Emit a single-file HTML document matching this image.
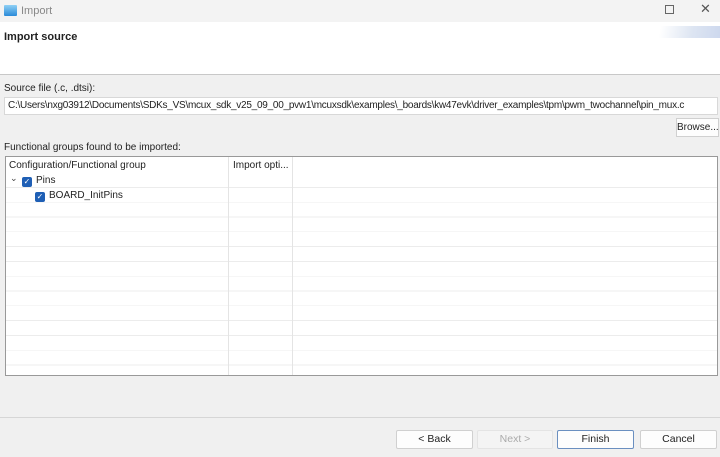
<!DOCTYPE html>
<html><head><style>
*{margin:0;padding:0;box-sizing:border-box}
body{width:720px;height:457px;background:#f0f0f0;font-family:"Liberation Sans",sans-serif;font-size:11px;color:#222;position:relative;overflow:hidden}
.a{position:absolute}
.btn{position:absolute;top:430px;height:19px;background:#fdfdfd;border:1px solid #d0d0d0;border-radius:2px;text-align:center;line-height:17px;font-size:10.5px}
.cb{position:absolute;width:10px;height:10px;background:#1f5fb5;border-radius:2px;color:#fff;font-size:8px;line-height:10px;text-align:center}
</style></head><body>
<div class="a" style="left:0;top:0;width:720px;height:22px;background:#f3f3f3"></div>
<div class="a" style="left:4px;top:5px;width:13px;height:11px;background:linear-gradient(#8fd0f5,#2a8ad8);border-radius:1px"></div>
<div class="a" style="left:21px;top:5px;color:#888;font-size:11px">Import</div>
<div class="a" style="left:665px;top:5px;width:9px;height:9px;border:1px solid #666"></div>
<div class="a" style="left:700px;top:1px;color:#555;font-size:13px">✕</div>
<div class="a" style="left:0;top:22px;width:720px;height:52px;background:#fff"></div>
<div class="a" style="left:640px;top:26px;width:80px;height:12px;background:linear-gradient(100deg,#fff 25%,#dde5f2 65%,#cdd8ee);border-radius:40px 0 0 0"></div>
<div class="a" style="left:4px;top:31px;font-weight:bold;font-size:11px">Import source</div>
<div class="a" style="left:0;top:74px;width:720px;height:1px;background:#c8c8c8"></div>
<div class="a" style="left:4px;top:83px;font-size:10px">Source file (.c, .dtsi):</div>
<div class="a" style="left:4px;top:97px;width:714px;height:18px;background:#fff;border:1px solid #d8d8d8;font-size:10px;line-height:16px;padding-left:3px;letter-spacing:-0.25px;white-space:nowrap">C:\Users\nxg03912\Documents\SDKs_VS\mcux_sdk_v25_09_00_pvw1\mcuxsdk\examples\_boards\kw47evk\driver_examples\tpm\pwm_twochannel\pin_mux.c</div>
<div class="a" style="left:676px;top:118px;width:43px;height:19px;background:#fdfdfd;border:1px solid #d0d0d0;font-size:10px;line-height:17px;text-align:center">Browse...</div>
<div class="a" style="left:4px;top:142px;font-size:10px">Functional groups found to be imported:</div>
<div class="a" style="left:5px;top:156px;width:713px;height:220px;background:#fff;border:1px solid #999;overflow:hidden">
<div style="position:absolute;left:0;top:16px;width:713px;height:210px;background:repeating-linear-gradient(#fff 0,#fff 14px,#ececec 14px,#ececec 14.8px)"></div>
<div class="a" style="left:222px;top:0;width:1px;height:220px;background:#e4e4e4"></div>
<div class="a" style="left:286px;top:0;width:1px;height:220px;background:#e4e4e4"></div>
<div class="a" style="left:3px;top:3px;font-size:10px">Configuration/Functional group</div>
<div class="a" style="left:227px;top:3px;font-size:10px">Import opti...</div>
<div class="a" style="left:4px;top:16px;font-size:9px;color:#444">⌄</div>
<div class="cb" style="left:16px;top:20px">✓</div>
<div class="a" style="left:30px;top:18px;font-size:10px">Pins</div>
<div class="cb" style="left:29px;top:35px">✓</div>
<div class="a" style="left:43px;top:33px;font-size:10px">BOARD_InitPins</div>
</div>
<div class="a" style="left:0;top:417px;width:720px;height:1px;background:#d6d6d6"></div>
<div class="btn" style="left:396px;width:77px">&lt; Back</div>
<div class="btn" style="left:477px;width:76px;background:#f4f4f4;color:#aaa;border-color:#e4e4e4">Next &gt;</div>
<div class="btn" style="left:557px;width:77px;border-color:#6a8fc0">Finish</div>
<div class="btn" style="left:640px;width:77px">Cancel</div>
</body></html>
